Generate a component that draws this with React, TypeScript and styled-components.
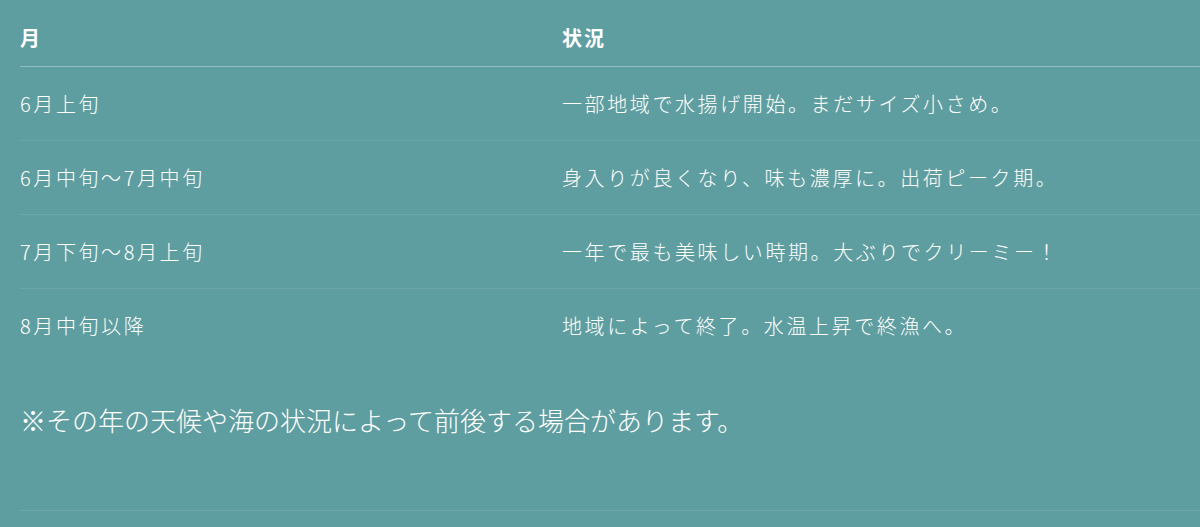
import React from 'react';
import styled, { createGlobalStyle } from 'styled-components';

const GlobalStyle = createGlobalStyle`
    html, body {
        margin: 0;
        padding: 0;
        background: #5f9ea0;
    }
    body {
        font-family: "Noto Sans CJK JP", "Noto Sans", sans-serif;
        color: #ffffff;
    }
`;

const Page = styled.div`
    min-height: 527px;
    padding-left: 20px;
    overflow: hidden;
`;

const Table = styled.table`
    width: 100%;
    border-collapse: collapse;
    table-layout: fixed;
`;

const HeadCell = styled.th<{ $width?: number }>`
    width: ${(p) => (p.$width ? `${p.$width}px` : 'auto')};
    text-align: left;
    font-size: 20px;
    line-height: 28px;
    letter-spacing: 2px;
    font-weight: 700;
    padding: 24px 0 14px;
    border-bottom: 1px solid rgba(255, 255, 255, 0.32);
`;

const Row = styled.tr<{ $last?: boolean }>`
    border-bottom: ${(p) => (p.$last ? 'none' : '1px solid rgba(255, 255, 255, 0.08)')};
`;

const Cell = styled.td`
    font-size: 20px;
    line-height: 28px;
    letter-spacing: 2.6px;
    font-weight: 300;
    padding: 23px 0 22px;
    vertical-align: middle;
`;

const Note = styled.p`
    margin: 41px 0 0;
    font-size: 26px;
    line-height: 34px;
    font-weight: 300;
    letter-spacing: 0px;
`;

const Rule = styled.hr`
    margin: 73px 0 0;
    border: none;
    border-top: 1px solid rgba(255, 255, 255, 0.1);
`;

const rows = [
    { month: '6月上旬', status: '一部地域で水揚げ開始。まだサイズ小さめ。' },
    { month: '6月中旬〜7月中旬', status: '身入りが良くなり、味も濃厚に。出荷ピーク期。' },
    { month: '7月下旬〜8月上旬', status: '一年で最も美味しい時期。大ぶりでクリーミー！' },
    { month: '8月中旬以降', status: '地域によって終了。水温上昇で終漁へ。' },
];

const App: React.FunctionComponent = () => {
    return (
        <>
            <GlobalStyle />
            <Page>
                <Table>
                    <thead>
                        <tr>
                            <HeadCell $width={542}>月</HeadCell>
                            <HeadCell>状況</HeadCell>
                        </tr>
                    </thead>
                    <tbody>
                        {rows.map((r, i) => (
                            <Row key={r.month} $last={i === rows.length - 1}>
                                <Cell>{r.month}</Cell>
                                <Cell>{r.status}</Cell>
                            </Row>
                        ))}
                    </tbody>
                </Table>
                <Note>※その年の天候や海の状況によって前後する場合があります。</Note>
                <Rule />
            </Page>
        </>
    );
};

export default App;
